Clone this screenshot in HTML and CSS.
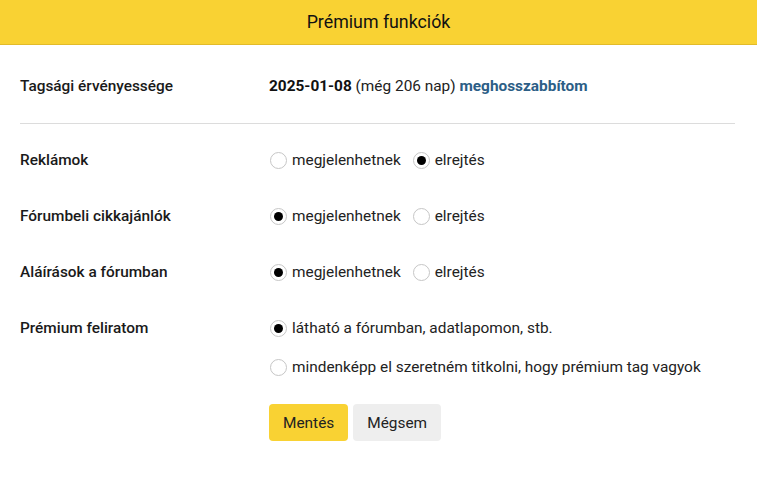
FILE: index.html
```html
<!DOCTYPE html>
<html lang="hu">
<head>
<meta charset="utf-8">
<title>Prémium funkciók</title>
<link rel="stylesheet" href="styles.css">
</head>
<body>
<header class="topbar">Prémium funkciók</header>
<main class="content">
  <div class="row info">
    <div class="label">Tagsági érvényessége</div>
    <div class="value"><b>2025-01-08</b> (még 206 nap) <a class="link" href="#">meghosszabbítom</a></div>
  </div>
  <hr class="sep">
  <div class="row">
    <div class="label">Reklámok</div>
    <div class="value opts">
      <label class="opt"><input type="radio" name="r1"> megjelenhetnek</label>
      <label class="opt"><input type="radio" name="r1" checked> elrejtés</label>
    </div>
  </div>
  <div class="row">
    <div class="label">Fórumbeli cikkajánlók</div>
    <div class="value opts">
      <label class="opt"><input type="radio" name="r2" checked> megjelenhetnek</label>
      <label class="opt"><input type="radio" name="r2"> elrejtés</label>
    </div>
  </div>
  <div class="row">
    <div class="label">Aláírások a fórumban</div>
    <div class="value opts">
      <label class="opt"><input type="radio" name="r3" checked> megjelenhetnek</label>
      <label class="opt"><input type="radio" name="r3"> elrejtés</label>
    </div>
  </div>
  <div class="row">
    <div class="label">Prémium feliratom</div>
    <div class="value stack">
      <label class="opt"><input type="radio" name="r4" checked> látható a fórumban, adatlapomon, stb.</label>
      <label class="opt"><input type="radio" name="r4"> mindenképp el szeretném titkolni, hogy prémium tag vagyok</label>
    </div>
  </div>
  <div class="row buttons">
    <div class="label"></div>
    <div class="value btns">
      <button class="btn primary">Mentés</button>
      <button class="btn">Mégsem</button>
    </div>
  </div>
</main>
</body>
</html>
```
FILE: styles.css
```css
* { box-sizing: border-box; }
body {
  margin: 0;
  font-family: Roboto, "Liberation Sans", sans-serif;
  font-size: 15.4px;
  color: #222;
  background: #fff;
}
.topbar {
  height: 45px;
  background: #f9d233;
  border-bottom: 1px solid #e2bb2a;
  text-align: center;
  font-size: 17.8px;
  line-height: 44px;
  color: #111;
}
.content {
  padding: 13px 22px 0 20px;
}
.row {
  display: grid;
  grid-template-columns: 249px 1fr;
  padding: 18px 0;
  line-height: 20px;
}
.label {
  font-weight: 500;
  color: #1a1a1a;
}
.value b { font-weight: 700; color: #111; }
.link {
  color: #2c5e86;
  font-weight: 700;
  text-decoration: none;
}
.sep {
  border: 0;
  border-top: 1px solid #dcdcdc;
  margin: 9px 0 8px;
}
.opts {
  display: flex;
  gap: 11px;
}
.stack {
  display: flex;
  flex-direction: column;
  gap: 19px;
}
.opt {
  display: inline-flex;
  align-items: center;
  gap: 5px;
}
.opt input {
  appearance: none;
  -webkit-appearance: none;
  width: 17px;
  height: 17px;
  margin: 0 0 0 1px;
  border: 1px solid #c6c6c6;
  border-radius: 50%;
  background: #fff;
  display: inline-grid;
  place-content: center;
}
.opt input:checked::before {
  content: "";
  width: 9px;
  height: 9px;
  border-radius: 50%;
  background: #000;
}
.buttons { padding-top: 9px; }
.btns {
  display: flex;
  gap: 5px;
}
.btn {
  font-family: inherit;
  font-size: 15.4px;
  color: #222;
  border: 0;
  border-radius: 4px;
  height: 37px;
  padding: 0 14px;
  background: #eeeeee;
}
.btn.primary {
  background: #f9d233;
  padding: 0 14px;
}
```
